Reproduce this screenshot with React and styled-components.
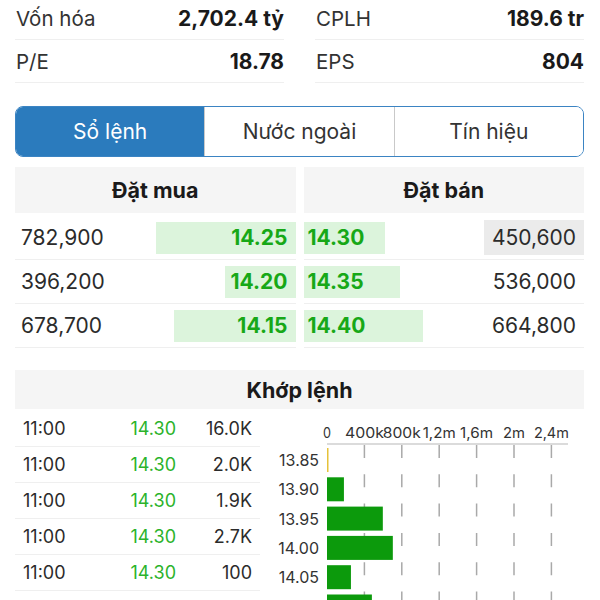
import React from 'react';
import styled, { createGlobalStyle } from 'styled-components';

const GlobalStyle = createGlobalStyle`
  html, body {
    margin: 0;
    padding: 0;
    background: #ffffff;
    overflow: hidden;
    font-family: 'Inter', 'Roboto', sans-serif;
    color: #2b2b2b;
  }
`;

const Page = styled.div`
  padding: 0 16px 0 15px;
`;

const StatsGrid = styled.div`
  display: grid;
  grid-template-columns: 1fr 1fr;
  column-gap: 31px;
  margin-top: -3px;
`;

const StatCell = styled.div`
  display: flex;
  justify-content: space-between;
  align-items: center;
  height: 42px;
  padding-left: 1px;
  border-bottom: 1px solid #efefef;
  font-size: 20.5px;
`;

const StatLabel = styled.span`
  color: #333;
`;

const StatValue = styled.span`
  font-weight: 700;
  font-size: 21px;
  color: #1a1a1a;
`;

const Tabs = styled.div`
  display: flex;
  margin-top: 23px;
  height: 51px;
  box-sizing: border-box;
  border: 1.5px solid #3b84c3;
  border-radius: 8px;
  overflow: hidden;
`;

const Tab = styled.div`
  flex: 1;
  display: flex;
  align-items: center;
  justify-content: center;
  font-size: 21px;
  background: ${({ $active }) => ($active ? '#2b7bbd' : '#ffffff')};
  color: ${({ $active }) => ($active ? '#ffffff' : '#333')};
  & + & {
    border-left: 1px solid #c9c9c9;
  }
`;

const OrderBook = styled.div`
  display: grid;
  grid-template-columns: 1fr 1fr;
  column-gap: 8px;
  margin-top: 10px;
`;

const SectionHeader = styled.div`
  display: flex;
  align-items: center;
  justify-content: center;
  height: ${({ $h }) => $h}px;
  background: #f5f5f5;
  font-size: 21.5px;
  font-weight: 700;
  color: #1a1a1a;
`;

const BookRows = styled.div`
  margin-top: 3px;
`;

const BookRow = styled.div`
  display: flex;
  align-items: center;
  justify-content: space-between;
  height: 43px;
  border-bottom: 1px solid #efefef;
  font-size: 21px;
`;

const Volume = styled.span`
  display: flex;
  align-items: center;
  height: 35px;
  padding: 0 ${({ $side }) => ($side === 'buy' ? '6px' : '8px')};
  background: ${({ $highlight }) => ($highlight ? '#ebebeb' : 'transparent')};
  color: #2b2b2b;
`;

const PriceBar = styled.span`
  display: flex;
  align-items: center;
  justify-content: ${({ $side }) => ($side === 'buy' ? 'flex-end' : 'flex-start')};
  box-sizing: border-box;
  height: 32px;
  padding: ${({ $side }) => ($side === 'buy' ? '0 8px 0 0' : '0 0 0 4px')};
  background: #dcf4dc;
  color: #17a817;
  font-weight: 700;
  white-space: nowrap;
`;

const MatchSection = styled.div`
  margin-top: 22px;
`;

const MatchBody = styled.div`
  display: grid;
  grid-template-columns: 245px 1fr;
`;

const TradeList = styled.div`
  margin-top: 2px;
`;

const TradeRow = styled.div`
  display: grid;
  grid-template-columns: 1fr 76px 76px;
  align-items: center;
  height: 35px;
  padding: 0 8px;
  border-bottom: 1px solid #efefef;
  font-size: 18px;
  color: #2b2b2b;

  span:nth-child(2), span:nth-child(3) {
    text-align: right;
  }
  span:nth-child(2) {
    color: #2bb32b;
  }
`;

const ChartSvg = styled.svg`
  display: block;
  font-family: 'Inter', 'Roboto', sans-serif;
`;

const stats = [
  ['Vốn hóa', '2,702.4 tỷ'],
  ['CPLH', '189.6 tr'],
  ['P/E', '18.78'],
  ['EPS', '804'],
];

const buys = [
  { vol: '782,900', price: '14.25', w: 140 },
  { vol: '396,200', price: '14.20', w: 71 },
  { vol: '678,700', price: '14.15', w: 122 },
];

const sells = [
  { vol: '450,600', price: '14.30', w: 81, hl: true },
  { vol: '536,000', price: '14.35', w: 96 },
  { vol: '664,800', price: '14.40', w: 119 },
];

const trades = [
  ['11:00', '14.30', '16.0K'],
  ['11:00', '14.30', '2.0K'],
  ['11:00', '14.30', '1.9K'],
  ['11:00', '14.30', '2.7K'],
  ['11:00', '14.30', '100'],
];

const ticks = [
  { label: '0', len: 8 },
  { label: '400k', len: 39 },
  { label: '800k', len: 38 },
  { label: '1,2m', len: 33 },
  { label: '1,6m', len: 33 },
  { label: '2m', len: 22 },
  { label: '2,4m', len: 35 },
];

const volumes = [
  { price: '13.85', v: 10000, color: '#e6c23a' },
  { price: '13.90', v: 181000 },
  { price: '13.95', v: 597000 },
  { price: '14.00', v: 704000 },
  { price: '14.05', v: 256000 },
  { price: '14.10', v: 480000 },
];

const X0 = 67;
const STEP = 37.4;
const ROW = 29.3;

const VolumeChart = () => (
  <ChartSvg width="324" height="200" viewBox="0 0 324 200">
    {ticks.map((t, i) => (
      <text
        key={t.label}
        x={X0 + i * STEP}
        y={29}
        fontSize="14"
        fill="#333"
        textAnchor="middle"
        textLength={t.len}
        lengthAdjust="spacingAndGlyphs"
      >
        {t.label}
      </text>
    ))}
    <line x1={X0} y1="35" x2="308" y2="35" stroke="#cfcfcf" strokeWidth="1.5" />
    {ticks.slice(1).map((t, i) => (
      <line
        key={t.label}
        x1={X0 + (i + 1) * STEP}
        y1="36"
        x2={X0 + (i + 1) * STEP}
        y2="200"
        stroke="#a9a9a9"
        strokeWidth="1.5"
        strokeDasharray="13 16.3"
      />
    ))}
    {volumes.map((d, i) => {
      const cy = 51 + i * ROW;
      const w = Math.max(1.5, (d.v / 400000) * STEP);
      return (
        <g key={d.price}>
          <text x="59" y={cy + 6} fontSize="16" fill="#333" textAnchor="end">
            {d.price}
          </text>
          <rect x={X0} y={cy - 12} width={w} height="24" fill={d.color || '#0c9a0c'} />
        </g>
      );
    })}
  </ChartSvg>
);

const App = () => (
  <>
    <GlobalStyle />
    <Page>
      <StatsGrid>
        {stats.map(([label, value]) => (
          <StatCell key={label}>
            <StatLabel>{label}</StatLabel>
            <StatValue>{value}</StatValue>
          </StatCell>
        ))}
      </StatsGrid>

      <Tabs>
        <Tab $active>Sổ lệnh</Tab>
        <Tab>Nước ngoài</Tab>
        <Tab>Tín hiệu</Tab>
      </Tabs>

      <OrderBook>
        <div>
          <SectionHeader $h={46}>Đặt mua</SectionHeader>
          <BookRows>
            {buys.map((b) => (
              <BookRow key={b.price}>
                <Volume $side="buy">{b.vol}</Volume>
                <PriceBar $side="buy" style={{ width: b.w }}>{b.price}</PriceBar>
              </BookRow>
            ))}
          </BookRows>
        </div>
        <div>
          <SectionHeader $h={46}>Đặt bán</SectionHeader>
          <BookRows>
            {sells.map((s) => (
              <BookRow key={s.price}>
                <PriceBar $side="sell" style={{ width: s.w }}>{s.price}</PriceBar>
                <Volume $side="sell" $highlight={s.hl}>{s.vol}</Volume>
              </BookRow>
            ))}
          </BookRows>
        </div>
      </OrderBook>

      <MatchSection>
        <SectionHeader $h={39}>Khớp lệnh</SectionHeader>
        <MatchBody>
          <TradeList>
            {trades.map((t, i) => (
              <TradeRow key={i}>
                <span>{t[0]}</span>
                <span>{t[1]}</span>
                <span>{t[2]}</span>
              </TradeRow>
            ))}
          </TradeList>
          <VolumeChart />
        </MatchBody>
      </MatchSection>
    </Page>
  </>
);

export default App;
